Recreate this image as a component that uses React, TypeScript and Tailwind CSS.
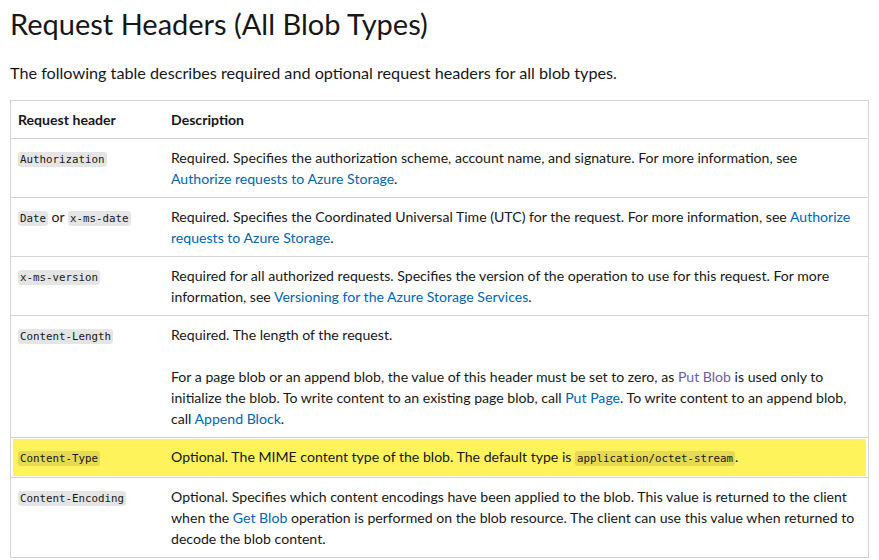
import React from 'react';

const font = { fontFamily: 'Lato, "Noto Sans", sans-serif' };

function Code({ children }: { children: React.ReactNode }) {
  return (
    <code className="rounded-[3px] bg-[rgba(0,0,0,0.1)] px-[2px] py-[1px] font-['DejaVu_Sans_Mono',monospace] text-[10.8px] text-[#171717]">
      {children}
    </code>
  );
}

function A({ children, visited }: { children: React.ReactNode; visited?: boolean }) {
  return <span className={visited ? 'text-[#6e5ba6]' : 'text-[#0065b3]'}>{children}</span>;
}

function Row({
  name,
  children,
  highlight,
}: {
  name: React.ReactNode;
  children: React.ReactNode;
  highlight?: boolean;
}) {
  return (
    <div className="border-b border-[#d4d4d4] py-[1px]">
      <div className={`mx-[2px] flex ${highlight ? 'bg-[#fff35b]' : ''}`}>
        <div className="w-[150px] shrink-0 whitespace-nowrap px-[5px] py-[7px]">{name}</div>
        <div className="flex-1 whitespace-nowrap px-[8px] py-[7px]">{children}</div>
      </div>
    </div>
  );
}

export default function App() {
  return (
    <div className="h-[560px] w-[879px] overflow-hidden bg-white pl-[10px] text-[#171717]" style={font}>
      <h1 className="pt-[6px] text-[29px] font-normal leading-[36px]">Request Headers (All Blob Types)</h1>
      <p className="mt-[20px] text-[16.2px] leading-[21px]">
        The following table describes required and optional request headers for all blob types.
      </p>
      <div className="mt-[17px] w-[859px] border-x border-t border-[#d4d4d4] text-[14.1px] leading-[21px]">
        <Row name={<span className="font-bold">Request header</span>}>
          <span className="font-bold">Description</span>
        </Row>
        <Row name={<Code>Authorization</Code>}>
          Required. Specifies the authorization scheme, account name, and signature. For more information, see
          <br />
          <A>Authorize requests to Azure Storage</A>.
        </Row>
        <Row
          name={
            <>
              <Code>Date</Code> or <Code>x-ms-date</Code>
            </>
          }
        >
          Required. Specifies the Coordinated Universal Time (UTC) for the request. For more information, see{' '}
          <A>Authorize</A>
          <br />
          <A>requests to Azure Storage</A>.
        </Row>
        <Row name={<Code>x-ms-version</Code>}>
          Required for all authorized requests. Specifies the version of the operation to use for this request. For more
          <br />
          information, see <A>Versioning for the Azure Storage Services</A>.
        </Row>
        <Row name={<Code>Content-Length</Code>}>
          <p>Required. The length of the request.</p>
          <p className="mt-[21px]">
            For a page blob or an append blob, the value of this header must be set to zero, as <A visited>Put Blob</A> is
            used only to
            <br />
            initialize the blob. To write content to an existing page blob, call <A>Put Page</A>. To write content to an
            append blob,
            <br />
            call <A>Append Block</A>.
          </p>
        </Row>
        <Row name={<Code>Content-Type</Code>} highlight>
          Optional. The MIME content type of the blob. The default type is <Code>application/octet-stream</Code>.
        </Row>
        <Row name={<Code>Content-Encoding</Code>}>
          Optional. Specifies which content encodings have been applied to the blob. This value is returned to the client
          <br />
          when the <A>Get Blob</A> operation is performed on the blob resource. The client can use this value when returned
          to
          <br />
          decode the blob content.
        </Row>
      </div>
    </div>
  );
}
